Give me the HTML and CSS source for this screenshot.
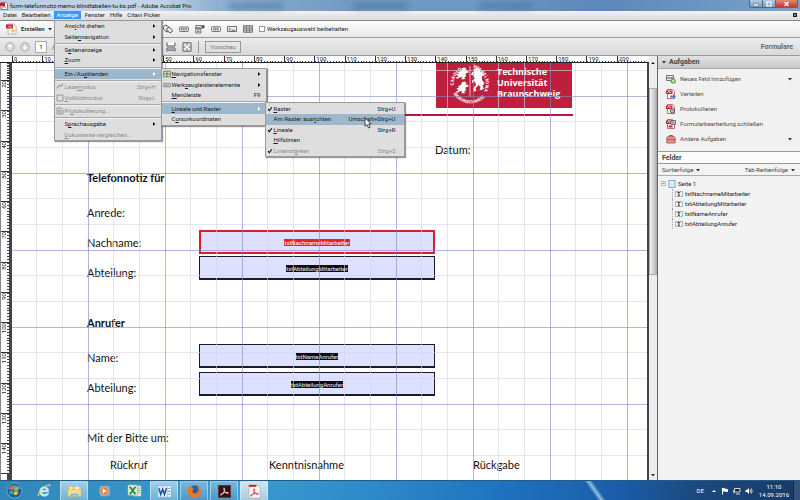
FILE: index.html
```html
<!DOCTYPE html>
<html lang="de">
<head>
<meta charset="utf-8">
<title>form-telefonnotiz-memo-blindtabellen-tu-bs.pdf - Adobe Acrobat Pro</title>
<link rel="stylesheet" href="styles.css">
</head>
<body>
<svg class="defs" aria-hidden="true">
  <symbol id="tri" viewBox="0 0 4 4"><path d="M1 0l2.4 2L1 4z" fill="#111"/></symbol>
  <symbol id="tri-w" viewBox="0 0 4 4"><path d="M1 0l2.4 2L1 4z" fill="#fff"/></symbol>
  <symbol id="down" viewBox="0 0 4 4"><path d="M0 1h4L2 3.4z" fill="#333"/></symbol>
  <symbol id="check" viewBox="0 0 6 6"><path d="M1 3.2l1.3 1.400L4.800 1.400" fill="none" stroke="#111" stroke-width="1.1"/></symbol>
  <symbol id="field" viewBox="0 0 8 6"><path d="M.5.5h7v5h-7z" fill="#f7f7f7" stroke="#777" stroke-width=".7" stroke-dasharray="1.5 .5"/><path d="M2.300 1.600h3M3.800 1.600v2.800M2.800 4.400h2" stroke="#222" stroke-width=".8"/></symbol>
  <symbol id="pdf" viewBox="0 0 10 10"><path d="M1.500.5h5l2 2v7h-7z" fill="#fff" stroke="#a33" stroke-width=".7"/><path d="M0 1.500h6.500v3.500H0z" fill="#c2202c"/><path d="M1 4l2-2 1 2 1.500-1" fill="none" stroke="#fff" stroke-width=".7"/></symbol>
</svg>
<div class="app">
  <header class="titlebar">
    <svg class="i8" viewBox="0 0 8 8"><path d="M1 .5h5l1.500 1.500v5.500H1z" fill="#fff" stroke="#a33" stroke-width=".7"/><path d="M0 1h5v3H0z" fill="#c2202c"/><path d="M2 6.500l2-3 1.500 2.500" fill="none" stroke="#c2202c" stroke-width=".8"/></svg>
    <span class="title">form-telefonnotiz-memo-blindtabellen-tu-bs.pdf - Adobe Acrobat Pro</span>
    <div class="glass"><i></i><i></i><i></i></div>
    <div class="winbtns">
      <button aria-label="Minimieren"><svg viewBox="0 0 8 6"><path d="M1.500 3h5v2h-5z" fill="#fff" stroke="#345" stroke-width=".4"/></svg></button>
      <button aria-label="Wiederherstellen"><svg viewBox="0 0 8 6"><path d="M2 1h4v4H2z" fill="none" stroke="#fff" stroke-width="1.200"/></svg></button>
      <button class="close" aria-label="Schließen"><svg viewBox="0 0 8 6"><path d="M2 1l4 4M6 1L2 5" stroke="#fff" stroke-width="1.300"/></svg></button>
    </div>
  </header>

  <nav class="menubar">
    <button>Datei</button><button>Bearbeiten</button>
    <div class="open">
      <button class="on">Anzeige</button>
      <ul class="menu m1">
        <li><span>Ans<u>i</u>cht drehen</span><svg><use href="#tri"/></svg></li>
        <li><span>Seite<u>n</u>navigation</span><svg><use href="#tri"/></svg></li>
        <li class="sep"></li>
        <li><span>S<u>e</u>itenanzeige</span><svg><use href="#tri"/></svg></li>
        <li><span><u>Z</u>oom</span><svg><use href="#tri"/></svg></li>
        <li class="sep"></li>
        <li class="hot"><span>Ein-/Au<u>s</u>blenden</span><svg><use href="#tri-w"/></svg>
          <ul class="menu m2">
            <li><svg class="mi" viewBox="0 0 9 8"><path d="M.8.8h7.400v6.400H.8z" fill="#dfe8d8" stroke="#486038" stroke-width=".8"/><path d="M1 4h7M4.500 1v6" stroke="#4b7a2c"/></svg><span><u>N</u>avigationsfenster</span><svg><use href="#tri"/></svg></li>
            <li><svg class="mi" viewBox="0 0 9 8"><rect x=".5" y="2.500" width="8" height="3.500" rx=".8" fill="#ddd" stroke="#555" stroke-width=".7"/><path d="M2 4.300h5" stroke="#666" stroke-dasharray="1 .6"/></svg><span>Werk<u>z</u>eugleistenelemente</span><svg><use href="#tri"/></svg></li>
            <li><span><u>M</u>enüleiste</span><kbd>F9</kbd></li>
            <li class="sep"></li>
            <li class="hot"><span><u>L</u>ineale und Raster</span><svg><use href="#tri-w"/></svg>
              <ul class="menu m3">
                <li><svg class="mi"><use href="#check"/></svg><span><u>R</u>aster</span><kbd>Strg+U</kbd></li>
                <li class="hot"><span>Am Raster ausr<u>i</u>chten</span><kbd>Umschalt+Strg+U</kbd>
                  <svg class="cursor" viewBox="0 0 8 12"><path d="M1 .8v8.400l2-1.800 1.500 3.600 1.600-.7-1.500-3.400h2.600z" fill="#fff" stroke="#222" stroke-width=".8"/></svg></li>
                <li><svg class="mi"><use href="#check"/></svg><span><u>L</u>ineale</span><kbd>Strg+R</kbd></li>
                <li><span><u>H</u>ilfslinien</span></li>
                <li class="off"><svg class="mi"><use href="#check"/></svg><span>Linienst<u>ä</u>rken</span><kbd>Strg+5</kbd></li>
              </ul>
            </li>
            <li><span>C<u>u</u>rsorkoordinaten</span></li>
          </ul>
        </li>
        <li class="sep"></li>
        <li class="off"><svg class="mi" viewBox="0 0 8 8"><path d="M1 5.500l1-2M2 3h2M5 1.500v2M6.500 1v1.500" stroke="#777" stroke-width=".9"/></svg><span>Lese<u>m</u>odus</span><kbd>Strg+H</kbd></li>
        <li class="off"><svg class="mi" viewBox="0 0 8 8"><path d="M1 1h6v6H1z" fill="#ddd" stroke="#888" stroke-width=".8"/></svg><span><u>V</u>ollbildmodus</span><kbd>Strg+L</kbd></li>
        <li class="sep"></li>
        <li class="off"><svg class="mi" viewBox="0 0 8 8"><path d="M1 1h4l2 2v4H1zM2 3.500h3M2 5h4" fill="none" stroke="#888" stroke-width=".8"/></svg><span>Pr<u>o</u>tokollierung...</span></li>
        <li class="sep"></li>
        <li><span>S<u>p</u>rachausgabe</span><svg><use href="#tri"/></svg></li>
        <li class="off"><span><u>D</u>okumente vergleichen...</span></li>
      </ul>
    </div>
    <button>Fenster</button><button>Hilfe</button><button>Citavi Picker</button>
    <button class="x" aria-label="Dokument schließen"><svg viewBox="0 0 4 4"><path d="M0 0h4v4H0z" fill="#222"/><path d="M1 1l2 2M3 1L1 3" stroke="#ccc" stroke-width=".5"/></svg></button>
  </nav>

  <div class="bar bar1">
    <div class="lead">
      <svg class="i12" viewBox="0 0 12 12"><path d="M3 1h6l2 2v8H3z" fill="#fff" stroke="#999" stroke-width=".7"/><path d="M1 1.500h7v4H1z" fill="#b92028"/><path d="M2.500 4.800l2-2 1 1.500 1.500-.7" fill="none" stroke="#fff" stroke-width=".7"/><path d="M8 5l.8 2 2 .8-2 .8L8 11l-.8-2.400-2-.8 2-.8z" fill="#f2b62c"/></svg>
      <button class="create">Erstellen <svg class="i4"><use href="#down"/></svg></button>
    </div>
    <div class="tools">
      <button aria-label="Link"><svg viewBox="0 0 10 10"><g fill="#eee" stroke="#444" stroke-width=".9"><rect x="1" y="1" width="5" height="7" rx="2.400" transform="rotate(-45 3.500 4.500)"/><rect x="4.500" y="3" width="4" height="6" rx="2" transform="rotate(-45 6.500 6)"/></g></svg></button>
      <button aria-label="OK"><svg viewBox="0 0 10 10"><rect x=".5" y="3" width="9" height="4.500" rx="1" fill="#ddd" stroke="#555" stroke-width=".8"/><path d="M2 5.200h6" stroke="#666" stroke-width="1.600" stroke-dasharray="1.500 .6"/></svg></button>
      <button aria-label="Liste"><svg viewBox="0 0 10 10"><path d="M.8 1.500h8.400V4H.8zM.8 4h5v5h-5z" fill="#eee" stroke="#555" stroke-width=".8"/><path d="M6.500 2h2.500v2H6.500z" fill="#555"/><path d="M2 5.700h2.600M2 7.400h2.600" stroke="#555" stroke-width=".8"/></svg></button>
      <button aria-label="Schaltfläche"><svg viewBox="0 0 10 10"><rect x=".5" y="2.700" width="9" height="4.800" rx="1.200" fill="#eee" stroke="#555" stroke-width=".8"/><circle cx="3.700" cy="5.100" r="1.100" fill="none" stroke="#444" stroke-width=".7"/><path d="M6 3.800v2.600M7.700 3.900L6.300 5l1.400 1.300" fill="none" stroke="#444" stroke-width=".7"/></svg></button>
      <button aria-label="Unterschrift"><svg viewBox="0 0 10 10"><path d="M.5 2.500h9v5h-9z" fill="#eee" stroke="#555" stroke-width=".8"/><path d="M2 4l1.500 1.300L2 6.500M4.500 6.300H8" fill="none" stroke="#444" stroke-width=".8"/></svg></button>
      <button aria-label="Barcode"><svg viewBox="0 0 10 10"><path d="M.6 1.700h8.800v6.600H.6z" fill="#ccc" stroke="#555" stroke-width=".8"/><path d="M1 4h8M1 6h8M3.500 2v6M6.500 2v6" stroke="#666" stroke-width=".7"/></svg></button>
      <label class="keep"><input type="checkbox"> Werkzeugauswahl beibehalten</label>
    </div>
  </div>

  <div class="bar bar2">
    <div class="lead nav">
      <button class="round" aria-label="Vorherige Seite"><svg viewBox="0 0 10 10"><circle cx="5" cy="5" r="4.500" fill="#d2d2d2" stroke="#aaa" stroke-width=".7"/><path d="M5 7.500V3M3 4.800l2-2 2 2" fill="none" stroke="#fff" stroke-width="1.300"/></svg></button>
      <button class="round" aria-label="Nächste Seite"><svg viewBox="0 0 10 10"><circle cx="5" cy="5" r="4.500" fill="#d2d2d2" stroke="#aaa" stroke-width=".7"/><path d="M5 2.500V7M3 5.200l2 2 2-2" fill="none" stroke="#fff" stroke-width="1.300"/></svg></button>
      <input class="pageno" type="text" value="1" aria-label="Seite"><span>/</span>
    </div>
    <div class="tools2">
      <button aria-label="Seitenbreite"><svg viewBox="0 0 10 10"><path d="M1 .5v3.500h8V.5M1 9.500V6h8v3.500" fill="#fff" stroke="#555"/><path d="M1.500 7.200h7v2h-7z" fill="#7c8aa0"/></svg></button>
      <button aria-label="Ganze Seite"><svg viewBox="0 0 10 10"><path d="M1 .8h8v8.400H1z" fill="#fff" stroke="#555"/><path d="M5 1v2.500M5 6.500V9M1.500 5h2M6.500 5h2" stroke="#555"/><path d="M2.500 2.500l1 1M7.500 2.500l-1 1M2.500 7.500l1-1M7.500 7.500l-1-1" stroke="#667" stroke-width=".7"/></svg></button>
      <i class="vsep"></i>
      <button class="preview">Vorschau</button>
    </div>
    <strong class="mode">Formulare</strong>
  </div>

  <main class="work">
    <section class="doc">
      <div class="hruler"><span>0</span><span>10</span><span>20</span><span>30</span><span>40</span><span>50</span><span>60</span><span>70</span><span>80</span><span>90</span><span>100</span><span>110</span><span>120</span><span>130</span><span>140</span><span>150</span><span>160</span><span>170</span><span>180</span><span>190</span><span>200</span></div>
      <div class="canvas">
        <div class="vruler"><div class="part"></div><div><b>20</b></div><div><b>30</b></div><div><b>40</b></div><div><b>50</b></div><div><b>60</b></div><div><b>70</b></div><div><b>80</b></div><div><b>90</b></div><div><b>100</b></div><div><b>110</b></div><div><b>120</b></div><div><b>130</b></div><div><b>140</b></div><div class="rest"></div></div>
        <form class="page">
          <div class="brand">
            <svg class="seal" viewBox="0 0 44 45">
              <defs><path id="ringLeft" d="M8.500 30A16.500 16.500 0 0 1 20 4.600"/><path id="ringRight" d="M25 4.600A16.500 16.500 0 0 1 35.500 29"/><path id="ringBot" d="M4 28A20 20 0 0 0 41 28"/></defs>
              <g font-family="Open Sans, sans-serif" font-size="4.500" font-weight="700" fill="#fff"><text><textPath href="#ringLeft" startOffset="8">CAROLO</textPath></text><text><textPath href="#ringRight" startOffset="0">WILHELMINA</textPath></text><text><textPath href="#ringBot" startOffset="3">BRAUNSCHWEIG</textPath></text></g>
              <path d="M22 3v31" stroke="#f3c3cd" stroke-width=".9"/>
              <path id="lion" d="M10 9l3-1 1-3 3-.5 1.500 2-1 2 2.500-1 .5 2-3 1 .5 3-2 1 1.500 1.500-4 .5 .5-2.500-2.500 .5-2.500 1.500-1-1.500 2.500-1-2-2 2.500-1z" fill="#fff"/>
              <use href="#lion" y="14"/>
              <path d="M26 6l4-1.500 3 2-1 2 2.500 1 1.500 3-2 .5v4l2.500 3-2 3 1.500 3-4.500 1.500 1-3.500-2-2-3 3.500 1 2.500-3.500 .5v-3l3-3.500-1-3.500-3 1.500v-2.500l3-2-2-3-2-1z" fill="#fff"/>
              <path d="M24 8h2M24 16h2M34 28h2M24 22h2M24 32h2" stroke="#4a4fa0" stroke-width="1.600"/>
            </svg>
            <p>Technische<br>Universität<br>Braunschweig</p>
          </div>
          <hr>
          <p class="date">Datum:</p>
          <h2>Telefonnotiz für</h2>
          <p class="anrede">Anrede:</p>
          <div class="pair">
            <div class="labels"><label for="f1">Nachname:</label><label for="f2">Abteilung:</label></div>
            <div class="fields">
              <div class="fld sel"><input id="f1" type="text"><span>txtNachnameMitarbeiter</span></div>
              <div class="fld"><input id="f2" type="text"><span>txtAbteilungMitarbeiter</span></div>
            </div>
          </div>
          <h2 class="caller">Anrufer</h2>
          <div class="pair wide">
            <div class="labels"><label for="f3">Name:</label><label for="f4">Abteilung:</label></div>
            <div class="fields">
              <div class="fld"><input id="f3" type="text"><span>txtNameAnrufer</span></div>
              <div class="fld"><input id="f4" type="text"><span>txtAbteilungAnrufer</span></div>
            </div>
          </div>
          <p class="ask">Mit der Bitte um:</p>
          <div class="opts"><span>Rückruf</span><span>Kenntnisnahme</span><span>Rückgabe</span></div>
        </form>
      </div>
    </section>
    <div class="scroll"><svg class="i4" viewBox="0 0 4 4"><path d="M0 3h4L2 1z" fill="#222"/></svg><i class="thumb"></i><svg class="i4 end"><use href="#down"/></svg></div>
    <aside class="panel">
      <h3 class="head"><svg class="i4"><use href="#down"/></svg>Aufgaben</h3>
      <div class="tasks">
        <button><svg class="i10" viewBox="0 0 10 10"><path d="M.5 1.500h7v5h-7z" fill="#eee" stroke="#555" stroke-width=".8"/><path d="M2 3v2M4 3v2M6 3v2" stroke="#444"/><circle cx="7.200" cy="7" r="2.600" fill="#58a634"/><path d="M5.800 7h2.800M7.200 5.600v2.800" stroke="#fff" stroke-width=".9"/></svg><span>Neues Feld hinzufügen</span><svg class="i4"><use href="#down"/></svg></button>
        <button><svg class="i10" viewBox="0 0 10 10"><use href="#pdf" width="10" height="10"/><path d="M4 6.500h3V5l3 2.500L7 10V8.500H4z" fill="#4a7fc4"/></svg><span>Verteilen</span></button>
        <button><svg class="i10" viewBox="0 0 10 10"><use href="#pdf" width="10" height="10"/><circle cx="6.500" cy="6.800" r="2.200" fill="#ddd" stroke="#444" stroke-width=".9"/><path d="M5.500 6.800h2" stroke="#444" stroke-width=".8"/></svg><span>Protokollieren</span></button>
        <button><svg class="i10" viewBox="0 0 10 10"><use href="#pdf" width="10" height="10"/><path d="M5 1.500h4.500v4H5z" fill="#dde" stroke="#556" stroke-width=".8"/><path d="M6 2.500l2.500 2M8.500 2.500L6 4.500" stroke="#556" stroke-width=".7"/><path d="M2.500 6.500h4v2h-4z" fill="#c2202c"/></svg><span>Formularbearbeitung schließen</span></button>
        <button><svg class="i10" viewBox="0 0 10 10"><path d="M3.500 3V1.500h3V3" fill="none" stroke="#a33" stroke-width=".9"/><path d="M.8 3.500l1-.8h6.400l1 .8V9H.8z" fill="#e39a94" stroke="#a84a46" stroke-width=".8"/><path d="M1 5.800h8" stroke="#a84a46" stroke-width=".9"/></svg><span>Andere Aufgaben</span><svg class="i4"><use href="#down"/></svg></button>
      </div>
      <h3 class="head2">Felder</h3>
      <div class="sort"><button>Sortierfolge <svg class="i4"><use href="#down"/></svg></button><button>Tab-Reihenfolge <svg class="i4"><use href="#down"/></svg></button></div>
      <div class="tree">
        <div class="root"><svg class="i5" viewBox="0 0 5 5"><path d="M.5.5h4v4h-4z" fill="#fff" stroke="#888" stroke-width=".6"/><path d="M1.500 2.500h2" stroke="#333" stroke-width=".6"/></svg><svg class="i8" viewBox="0 0 8 8"><path d="M.8.5h6.400v7H.8z" fill="#d5e9f8" stroke="#6f9dbb" stroke-width=".8"/><path d="M2 1.500h3v3z" fill="#fff"/></svg><span>Seite 1</span></div>
        <ul>
          <li><svg><use href="#field"/></svg>txtNachnameMitarbeiter</li>
          <li><svg><use href="#field"/></svg>txtAbteilungMitarbeiter</li>
          <li><svg><use href="#field"/></svg>txtNameAnrufer</li>
          <li><svg><use href="#field"/></svg>txtAbteilungAnrufer</li>
        </ul>
      </div>
    </aside>
  </main>

  <footer class="taskbar">
    <button class="start" aria-label="Start"><svg viewBox="0 0 18 18"><circle cx="9" cy="9" r="8" fill="#1f5f94" stroke="#7fb9dc" stroke-width=".8"/><path d="M2 7a8 7 0 0 1 14 0q-7 3-14 0z" fill="#8cbfdf" opacity=".6"/><path d="M4.500 5.500q2-1.200 4-.2L8 8.700q-2-1-4 .1z" fill="#e8622c"/><path d="M9.300 5.500q2 1 4 0l-.6 3.400q-2 1-3.900 0z" fill="#8fc640"/><path d="M3.900 9.700q2-1 4 0l-.5 3.300q-2-1-3.900.1z" fill="#3fa3e0"/><path d="M8.700 9.800q2 1 4 0l-.5 3.400q-2 1-4 0z" fill="#fcc82c"/></svg></button>
    <button aria-label="Internet Explorer"><svg viewBox="0 0 16 16"><path d="M12.500 9.500H5.200q.3 2.700 3 2.700 1.700 0 2.400-1.200h2q-1 3.200-4.500 3.200-5.200 0-5.200-5.300Q3 4 8 4q4.700 0 4.500 5.500zM5.300 7.800h5Q10 5.700 7.900 5.700T5.300 7.800z" fill="#bfe8fb" stroke="#e4f6ff" stroke-width=".5"/><path d="M2 13.500Q-.5 15 2 9.500 6 3 12 1.500q3.500-.6 1.500 3.500.2-3-2.500-2Q5 5.500 2.500 11q-1 2.500 1 1.500z" fill="#f4d347"/></svg></button>
    <button class="act" aria-label="Explorer"><svg viewBox="0 0 16 16"><path d="M1 4V2.500h5L7 4h7v9H1z" fill="#e4bc57"/><path d="M3 3h3v8H3zM8 3h5v7H8z" fill="#f8f0cc"/><path d="M1 6h14v7H1z" fill="#f7dc87" stroke="#d9b35a" stroke-width=".5"/><path d="M4 13v-2.500h8V13h-2v-1H6v1z" fill="#6fb5de"/></svg></button>
    <button aria-label="Media Player"><svg viewBox="0 0 16 16"><rect x="3" y="3" width="11" height="11" rx="1.500" fill="#8fb9d4" opacity=".7"/><circle cx="7.500" cy="8.500" r="4.500" fill="#e8762c" stroke="#f6c49a" stroke-width=".7"/><path d="M6 5.500l4.500 3L6 11.500z" fill="#fff"/></svg></button>
    <button aria-label="Excel"><svg viewBox="0 0 16 16"><path d="M7 3h8v11H7z" fill="#eef6ea" stroke="#7fb98a" stroke-width=".6"/><path d="M10 5.500h4M10 8h4M10 10.500h4" stroke="#59a764"/><path d="M1 2h9l1 1v10H1z" fill="#e3f1e2" stroke="#7fb98a" stroke-width=".6"/><path d="M3 4l6 8M9 4l-6 8" stroke="#2c8a3c" stroke-width="2"/></svg></button>
    <button class="act" aria-label="Word"><svg viewBox="0 0 16 16"><path d="M5 2h10v12H5z" fill="#f4f8fd" stroke="#7d9fce" stroke-width=".6"/><path d="M11 5h3M11 8h3M11 11h3" stroke="#6c92c8"/><path d="M1 2h10v12H1z" fill="#e6eefa" stroke="#8fabd6" stroke-width=".6"/><path d="M2 4.500L4 11l2-5.500L8 11l2-6.500" fill="none" stroke="#224f9c" stroke-width="1.600"/></svg></button>
    <button class="act dim" aria-label="Firefox"><svg viewBox="0 0 16 16"><circle cx="8" cy="8" r="7" fill="#e66a1c"/><circle cx="8.500" cy="6.500" r="5" fill="#2e5f9e"/><path d="M1.200 6Q2 2 3.500 2.500 6 3.500 7 5.500q-2 1-1 3t4 1q2.500-1 2-4.500 3 3 1.500 6.500Q11 16 6 14.500 1 12 1.200 6z" fill="#ea7a22"/><path d="M12 3q3 3 2.200 7 .8-4-1.700-5z" fill="#fbd04a"/></svg></button>
    <button class="act dim" aria-label="Acrobat"><svg viewBox="0 0 16 16"><path d="M1.500 1.500h13v13h-13z" fill="#3a0d10" stroke="#7a2b2b" stroke-width=".6"/><path d="M7.500 4q1 0 .5 3-1 3-3.500 5-1.500 0 0-1.500Q8 8.500 11.500 9q1.500.6 0 1.200Q8.500 10 7.500 6.500 6.800 4.500 7.500 4z" fill="none" stroke="#f3dede" stroke-width=".9"/></svg></button>
    <button class="act bright" aria-label="Acrobat Pro"><svg viewBox="0 0 16 16"><path d="M2 1h9l3 3v11H2z" fill="#f9f4f4" stroke="#d88" stroke-width=".6"/><path d="M2 1h8v2H2z" fill="#c2202c"/><path d="M7.500 5q1 0 .5 3-1 3-3.500 5-1.500 0 0-1.500Q8 9.500 11.500 10q1.500.6 0 1.200Q8.500 11 7.500 7.500 6.800 5.500 7.500 5z" fill="none" stroke="#b83a44" stroke-width=".9"/></svg></button>
    <div class="tray">
      <span>DE</span>
      <svg class="i5" viewBox="0 0 4 4"><path d="M0 3h4L2 1z" fill="#fff"/></svg>
      <svg class="i8" viewBox="0 0 8 8"><path d="M1.500 1v6.500" stroke="#fff" stroke-width="1.100"/><path d="M2 1.200h2.500v.8H7v3H4.500v-.6H2z" fill="#fff"/></svg>
      <svg class="i8" viewBox="0 0 8 8"><path d="M1.500 1.500h5.500v3.500H1.500z" fill="#223" stroke="#fff" stroke-width=".8"/><path d="M3 7h4M.8 3v3.500" stroke="#fff" stroke-width=".8"/></svg>
      <svg class="i8" viewBox="0 0 8 8"><path d="M.5 3h1.500l2-2v6l-2-2H.5z" fill="#fff"/><path d="M5 2.500q1 1.500 0 3M6.300 1.500q1.700 2.500 0 5" fill="none" stroke="#fff" stroke-width=".8"/></svg>
      <time>11:10<br>14.09.2016</time>
      <i class="desk"></i>
    </div>
  </footer>
</div>
</body>
</html>
```
FILE: styles.css
```css
* { box-sizing: border-box; }
body { margin: 0; font: 6px/8px Roboto, "Open Sans", sans-serif; color: #1a1a1a; }
button { font: inherit; color: inherit; background: none; border: 0; padding: 0; }
ul { list-style: none; margin: 0; padding: 0; }
p, h2, h3 { margin: 0; }
kbd { font: inherit; }
svg { display: block; flex: none; }
.defs { position: absolute; width: 0; height: 0; }
.i4 { width: 4px; height: 4px; }
.i5 { width: 5px; height: 5px; }
.i8 { width: 8px; height: 8px; }
.i10 { width: 10px; height: 10px; }
.i12 { width: 12px; height: 12px; }

.app { display: flex; flex-direction: column; height: 100vh; overflow: hidden; background: #f3f3f3; }

/* Window frame */
.titlebar { display: flex; align-items: center; gap: 2px; height: 11px; background: linear-gradient(90deg, #b9cee4 0, #c3d4e6 20%, #8eb0d2 27%, #7098c2 45%, #6f98c5 60%, #5a88b8 75%, #7ba3cc 100%); }
.title { color: #111; white-space: nowrap; }
.glass { flex: 1; display: flex; justify-content: space-around; padding-right: 180px; }
.glass i { width: 56px; height: 6px; border-radius: 3px; background: #3d6290; opacity: .5; filter: blur(3px); }
.winbtns { display: flex; align-self: flex-start; height: 8px; margin-right: 2px; border: 1px solid #4a6a8c; border-top: 0; border-radius: 0 0 2px 2px; overflow: hidden; }
.winbtns button { width: 13px; background: linear-gradient(#b7cbe0, #7a9cc0); border-right: 1px solid #4a6a8c; }
.winbtns svg { width: 100%; height: 6px; }
.winbtns .close { width: 21px; border: 0; background: linear-gradient(#e08a78, #c23a22); }

.menubar { display: flex; height: 10px; padding-left: 1px; background: linear-gradient(#f2f2f2, #dcdcdc); border-bottom: 1px solid #888; }
.menubar > button, .open > button { height: 8px; padding: 0 3px 0 2px; white-space: nowrap; }
.open { position: relative; margin-right: 2px; }
.open > .on { padding: 0 3px; background: #3399ff; color: #fff; }
.menubar > .x { margin: 0 3px 0 auto; padding: 0; }
.x svg { width: 4px; height: 4px; }

/* Cascading menus */
.menu { position: absolute; z-index: 5; display: flex; flex-direction: column; background: #dedede; border: 1px solid #9a9a9a; box-shadow: 1px 1px 1px #0006; color: #1a1a1a; }
.menu li { position: relative; flex: 1; display: flex; align-items: center; justify-content: space-between; padding: 0 5px 0 10px; white-space: nowrap; }
.menu li > svg { width: 4px; height: 4px; }
.menu li > .mi { position: absolute; left: 1px; width: 8px; height: 8px; }
.menu .sep { flex: 0 0 3px; border-top: 1px solid #dedede; background: linear-gradient(#a8a8a8 50%, #f2f2f2 50%); height: 3px; }
.menu .hot { background: #9db8cd; }
.menu .off { color: #8b8b8b; }
.m1 { top: 9px; left: 0; width: 108px; height: 121px; }
.m2 { top: -1px; left: 106px; width: 106px; height: 58px; }
.m3 { top: -1px; left: 103px; width: 140px; height: 55px; }
.menu .m3 > li { padding: 0 8px; }
.menu .m3 > li > .mi { width: 6px; height: 6px; }
.menu li > .cursor { position: absolute; left: 98px; top: 3px; width: 8px; height: 12px; z-index: 6; }

/* Toolbars */
.bar { display: flex; align-items: center; border-bottom: 1px solid #9c9c9c; }
.bar1 { height: 17px; background: linear-gradient(#fdfdfd, #e8e8e8); }
.bar2 { height: 18px; background: linear-gradient(#ececec, #d9d9d9); }
.lead { display: flex; align-items: center; gap: 4px; flex: 0 0 163px; padding-left: 5px; }
.create { display: flex; align-items: center; gap: 3px; font-weight: 700; color: #333; }
.tools, .tools2 { display: flex; align-items: center; gap: 6px; }
.tools svg, .tools2 svg { width: 10px; height: 10px; }
.keep { display: flex; align-items: center; gap: 2px; white-space: nowrap; }
.keep input { appearance: none; width: 6px; height: 6px; margin: 0; background: #fff; border: 1px solid #999; }
.nav { gap: 5px; }
.round svg { width: 10px; height: 10px; }
.pageno { width: 12px; height: 12px; padding: 0; text-align: center; font: inherit; border: 1px solid #aaa; background: #fff; }
.tools2 { padding-left: 3px; }
.vsep { width: 1px; height: 12px; background: #999; }
.preview { width: 36px; height: 12px; border: 1px solid #999; color: #777; }
.mode { margin-left: auto; padding-right: 7px; font-size: 7px; color: #666; }

/* Document area */
.work { flex: 1; min-height: 0; display: flex; }
.doc { flex: 1; display: flex; flex-direction: column; min-width: 0; }
.hruler { display: flex; height: 7px; padding: 0 2px 0 12px; background: #fff; border-bottom: 1px solid #222; }
.hruler span { flex: 1; line-height: 5px; padding-left: 1px; border-left: 1px solid #333; background: repeating-linear-gradient(90deg, #444 0 1px, transparent 1px 10%) bottom / 100% 1px no-repeat; }
.canvas { flex: 1; min-height: 0; display: flex; }
.vruler { flex: 0 0 12px; display: flex; flex-direction: column; min-height: 0; border-left: 1px solid #888; border-right: 3px solid #44444f; background: #fff; }
.vruler div { flex: 10 1 0; min-height: 0; overflow: hidden; border-top: 1px solid #333; background: repeating-linear-gradient(#444 0 1px, transparent 1px 10%) right / 2px 100% no-repeat; }
.vruler .part { flex: 0 0 17px; border: 0; }
.vruler .rest { flex-grow: 2; }
.vruler b { display: block; writing-mode: vertical-rl; transform: rotate(180deg); font-weight: 400; line-height: 6px; width: 6px; }

.page { position: relative; flex: 1; min-width: 0; overflow: hidden; padding-left: 75px; background: #fff; border-right: 2px solid #44444f; font: 11px/16px Lato, "Open Sans", sans-serif; color: #111; }
/* Layout grid drawn over the page: one major and two minor lines per tile */
.page::after { content: ""; position: absolute; inset: 0; pointer-events: none; background:
  linear-gradient(90deg, #8888c8a0 1px, transparent 1px) 76px 0 / 77px 77px,
  linear-gradient(#8888c8a0 1px, transparent 1px) 0 33px / 77px 77px,
  linear-gradient(90deg, transparent 25px, #d4d4eca0 25px 26px, transparent 26px 51px, #d4d4eca0 51px 52px, transparent 52px) 76px 0 / 77px 77px,
  linear-gradient(transparent 25px, #d4d4eca0 25px 26px, transparent 26px 51px, #d4d4eca0 51px 52px, transparent 52px) 0 33px / 77px 77px; }
.brand { display: flex; gap: 5px; width: 136px; height: 45px; margin-left: 349px; padding-left: 12px; background: #bd1f3d; color: #fff; }
.seal { width: 44px; height: 45px; }
.brand p { padding-top: 3px; font: 700 9px/11px "Open Sans", sans-serif; }
hr { width: 486px; height: 2px; margin: 6px 0 26px; border: 0; background: #b3163c; }
.date { margin-left: 348px; }
h2 { font: inherit; font-weight: 700; margin-top: 12px; }
.anrede { margin-top: 19px; }
.pair { display: flex; margin-top: 7px; }
.labels { flex: 0 0 112px; }
.labels label { display: block; line-height: 30px; }
.fields { display: grid; align-content: start; gap: 2px; padding-top: 2px; }
.wide .fields { gap: 4px; padding-top: 1px; }
.fld { display: grid; place-items: center; width: 236px; height: 24px; }
.fld > * { grid-area: 1 / 1; }
.fld input { width: 100%; height: 100%; border: 1px solid #1c1c28; border-bottom-width: 2px; background: #dce1ff; }
.fld span { font: 6px/7px Roboto, sans-serif; background: #0c0c14; color: #eee; }
.fld.sel input { border: 2px solid #d81e28; }
.fld.sel span { background: #e8202c; color: #fff; }
.caller { margin-top: 27px; }
.wide { margin-top: 12px; }
.ask { margin-top: 27px; }
.opts { display: grid; grid-template-columns: 159px 204px 1fr; margin-top: 11px; padding-left: 23px; }

.scroll { flex: 0 0 8px; display: flex; flex-direction: column; align-items: center; padding: 5px 0 3px; background: #ececec; }
.thumb { width: 8px; height: 187px; margin-top: 23px; border: 1px solid #aaa; background: linear-gradient(90deg, #f5f5f5, #b5b5b5); }
.end { margin-top: auto; }

/* Task pane */
.panel { flex: 0 0 143px; border-left: 1px solid #666; background: #f3f3f3; color: #444; }
.head { display: flex; align-items: center; gap: 3px; height: 13px; padding-left: 4px; font-size: 7px; background: linear-gradient(#e2e2e2, #c9c9c9); border-bottom: 1px solid #aaa; }
.tasks { display: flex; flex-direction: column; padding: 2px 8px 5px; border-bottom: 1px solid #999; background: #f1f1f1; }
.tasks button { display: flex; align-items: center; gap: 4px; height: 15px; text-align: left; }
.tasks button .i4 { margin-left: auto; }
.tasks span { color: #4c4c4c; }
.head2 { height: 12px; line-height: 12px; padding-left: 4px; font-size: 7px; background: #fbfbfb; border-bottom: 1px solid #999; }
.sort { display: flex; justify-content: space-between; align-items: center; height: 12px; padding: 0 5px 0 4px; border-bottom: 1px solid #aaa; }
.sort button { display: flex; align-items: center; gap: 3px; }
.tree { padding: 2px 3px; color: #222; }
.root { display: flex; align-items: center; gap: 2px; height: 11px; }
.tree ul { margin-left: 11px; }
.tree li { display: flex; align-items: center; gap: 2px; height: 10px; padding-left: 2px; border-left: 1px dotted #aaa; }
.tree li svg { width: 8px; height: 6px; }

/* Taskbar */
.taskbar { flex: 0 0 20px; display: flex; align-items: stretch; gap: 2px; border-top: 1px solid #245a86; background: linear-gradient(55deg, transparent 38%, #b8dcf5c0 50%, transparent 62%) 75% 0 / 22px 100% no-repeat, linear-gradient(100deg, #2f86b8 0, #3d9bcf 30%, #2f8bc9 45%, #1f74bf 62%, #1a5ca8 78%, #1c4a80 86%, #173a66 100%); }
.taskbar > button { flex: 0 0 28px; display: grid; place-items: center; }
.taskbar svg { width: 15px; height: 15px; }
.taskbar > .start svg { width: 17px; height: 17px; }
.act { border: 1px solid #ffffff70; border-bottom: 0; background: linear-gradient(#9fd0e8, #6fb3d6); border-radius: 1px; }
.dim { background: linear-gradient(#78b8dc, #4a9aca); }
.bright { background: linear-gradient(#cfe6f2, #a3cde2); }
.tray { display: flex; align-items: center; gap: 4px; margin-left: auto; color: #fff; }
.tray .i5 { width: 4px; height: 4px; margin: 0 1px 0 4px; }
.tray .i8 { width: 8px; height: 8px; }
.tray time { text-align: center; margin-left: 2px; }
.desk { align-self: stretch; width: 7px; border-left: 1px solid #0d2748; background: #ffffff20; }
```
